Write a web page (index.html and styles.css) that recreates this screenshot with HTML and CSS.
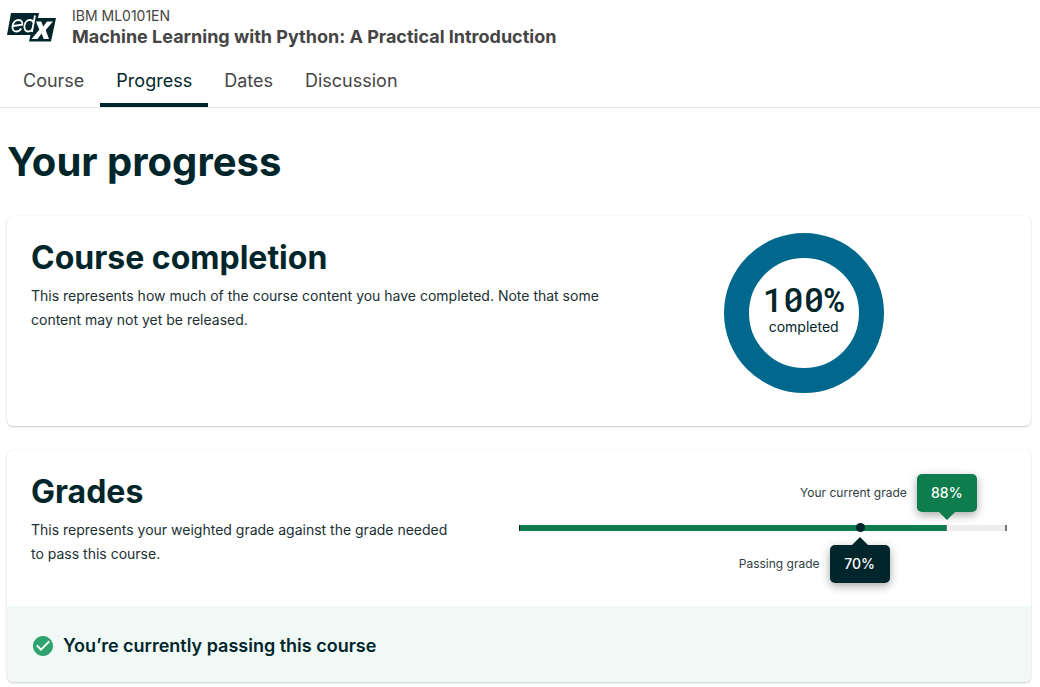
FILE: index.html
```
<!DOCTYPE html>
<html lang="en">
<head>
<meta charset="utf-8">
<meta name="viewport" content="width=device-width, initial-scale=1">
<title>Your progress | edX</title>
<link rel="stylesheet" href="styles.css">
</head>
<body>
<header class="course-header">
  <a class="logo" href="#" aria-label="edX">
    <svg width="50" height="30" viewBox="0 0 50 30" aria-hidden="true">
      <path d="M4 0H32L31 5H49L44 28.500H22L23.500 22H0Z" fill="#00262b"/>
      <g fill="none" stroke="#fff" stroke-width="1.800">
        <path d="M6 13L15.300 11.600C15.600 8.800 14.200 7 11.800 7C8.600 7 6 9.500 5.500 12.900C5 16.200 6.700 18.500 9.300 18.500C11.500 18.500 13.200 17.300 14.200 15.500"/>
        <path d="M28 2.500L24.900 19M26.900 10.700C26.300 8.200 24.900 7 22.800 7C19.800 7 17.700 10 17.400 13C17.100 16.200 18.600 18.500 21 18.500C23.300 18.500 25.200 16.800 26.100 14.200"/>
      </g>
      <path d="M29 8.500H34.300L36.200 13.500L40 8.500H46L38.700 17L42 26H36.700L34.600 20.500L30.500 26H24.500L32.300 16.700Z" fill="#fff"/>
    </svg>
  </a>
  <div class="course-name">
    <span class="course-code">IBM ML0101EN</span>
    <span class="course-title">Machine Learning with Python: A Practical Introduction</span>
  </div>
</header>
<nav class="tabs" aria-label="Course">
  <a class="tab" href="#">Course</a>
  <a class="tab tab-active" href="#" aria-current="page">Progress</a>
  <a class="tab" href="#">Dates</a>
  <a class="tab" href="#">Discussion</a>
</nav>
<main class="page">
  <h1 class="page-title">Your progress</h1>
  <section class="card completion">
    <div class="completion-text">
      <h2 class="card-title">Course completion</h2>
      <p class="copy">This represents how much of the course content you have completed. Note that some content may not yet be released.</p>
    </div>
    <div class="donut-area">
      <div class="donut">
        <span class="donut-value">100%</span>
        <span class="donut-label">completed</span>
      </div>
    </div>
  </section>
  <section class="card">
    <div class="grades">
      <div class="grades-text">
        <h2 class="card-title">Grades</h2>
        <p class="copy">This represents your weighted grade against the grade needed to pass this course.</p>
      </div>
      <div class="grade-area">
        <div class="grade-bar">
          <div class="grade-fill" style="width: 88%"></div>
          <div class="grade-dot" style="left: 70%"></div>
          <div class="marker marker-current" style="left: 88%"><span class="marker-label">Your current grade</span>88%</div>
          <div class="marker marker-passing" style="left: 70%"><span class="marker-label">Passing grade</span>70%</div>
        </div>
      </div>
    </div>
    <div class="status">
      <svg class="status-icon" width="24" height="24" viewBox="0 0 24 24" aria-hidden="true">
        <path d="M12 2C6.480 2 2 6.480 2 12s4.480 10 10 10 10-4.480 10-10S17.520 2 12 2zm-2 15l-5-5 1.410-1.410L10 14.170l7.590-7.590L19 8l-9 9z" fill="#2fa36f"/>
      </svg>
      <h3 class="status-text">You’re currently passing this course</h3>
    </div>
  </section>
</main>
</body>
</html>
```
FILE: styles.css
```
* { box-sizing: border-box; }
body {
  margin: 0;
  background: #fff;
  color: #454545;
  font-family: Inter, "Liberation Sans", sans-serif;
  font-size: 14px;
  line-height: 24px;
}
h1, h2, h3, p { margin: 0; }
a { color: inherit; text-decoration: none; }

.course-header {
  display: flex;
  gap: 15px;
  padding: 6px 7px 0;
}
.logo { padding-top: 7px; height: 42px; }
.logo svg { display: block; }
.course-name { display: flex; flex-direction: column; line-height: 20px; }
.course-title { font-size: 18px; line-height: 22px; font-weight: 700; }

.tabs {
  display: flex;
  margin-top: 7px;
  padding: 0 7px;
  border-bottom: 1px solid #e7e8e9;
}
.tab {
  padding: 14px 16px 10px;
  border-bottom: 4px solid transparent;
  font-size: 18px;
  line-height: 24px;
}
.tab-active { border-color: #00262b; color: #00262b; }

.page { padding: 30px 9px 5px 7px; color: #00262b; }
.page-title { font-size: 40px; line-height: 48px; font-weight: 700; }
.card {
  margin-top: 24px;
  border-radius: 6px;
  overflow: hidden;
  background: #fff;
  box-shadow: 0 1px 2px rgba(0, 0, 0, 0.2), 0 0 2px rgba(0, 0, 0, 0.06);
}
.page-title + .card { margin-top: 30px; }
.card-title { font-size: 32px; line-height: 36px; font-weight: 700; margin-bottom: 8px; }
.copy { color: #202f33; }

.completion { display: grid; grid-template-columns: 7fr 5fr; padding: 24px 24px 33px; }
.donut-area { display: flex; justify-content: center; margin-top: -7px; }
.donut {
  display: flex;
  flex-direction: column;
  align-items: center;
  width: 160px;
  height: 160px;
  padding-top: 20px;
  border: 25px solid #00688d;
  border-radius: 50%;
}
.donut-value {
  font-family: "Roboto Mono", Inter, monospace;
  font-size: 34px;
  line-height: 42px;
  font-weight: 500;
}
.donut-label { line-height: 14px; }

.grades {
  display: grid;
  grid-template-columns: 1fr 1fr;
  padding: 24px 24px 40px;
}
.grades-text { padding-right: 64px; }
.grade-area { padding-top: 51px; }
.grade-bar {
  position: relative;
  height: 6px;
  background: #f0eeed;
  border-left: 1px solid #00262b;
  border-right: 2px solid #707e80;
}
.grade-fill { height: 6px; background: #0d7d4d; border-right: 1px solid #56796a; }
.grade-dot {
  position: absolute;
  top: -2px;
  width: 9px;
  height: 9px;
  margin-left: -4px;
  border-radius: 50%;
  background: #00262b;
}
.marker {
  position: absolute;
  width: 60px;
  padding: 8px 0;
  margin-left: -30px;
  border-radius: 5px;
  color: #fff;
  font-weight: 500;
  line-height: 22px;
  text-align: center;
  box-shadow: 0 3px 10px rgba(0, 0, 0, 0.35);
}
.marker::after {
  content: "";
  position: absolute;
  left: 22px;
  border: 8px solid transparent;
}
.marker-current { bottom: 19px; background: #0d7d4d; }
.marker-current::after { top: 100%; border-top-color: #0d7d4d; border-bottom: 0; }
.marker-passing { top: 20px; background: #00262b; }
.marker-passing::after { bottom: 100%; border-bottom-color: #00262b; border-top: 0; }
.marker-label {
  position: absolute;
  right: 100%;
  margin-right: 10px;
  color: #303c40;
  font-size: 12px;
  font-weight: 400;
  white-space: nowrap;
}

.status {
  display: flex;
  align-items: center;
  gap: 8px;
  padding: 28px 24px 24px;
  background: #f0f9f6;
}
.status-text { font-size: 18px; line-height: 24px; font-weight: 600; }

@media (max-width: 720px) {
  .completion, .grades { grid-template-columns: 1fr; gap: 24px; }
  .grades-text { padding-right: 0; }
}
```
